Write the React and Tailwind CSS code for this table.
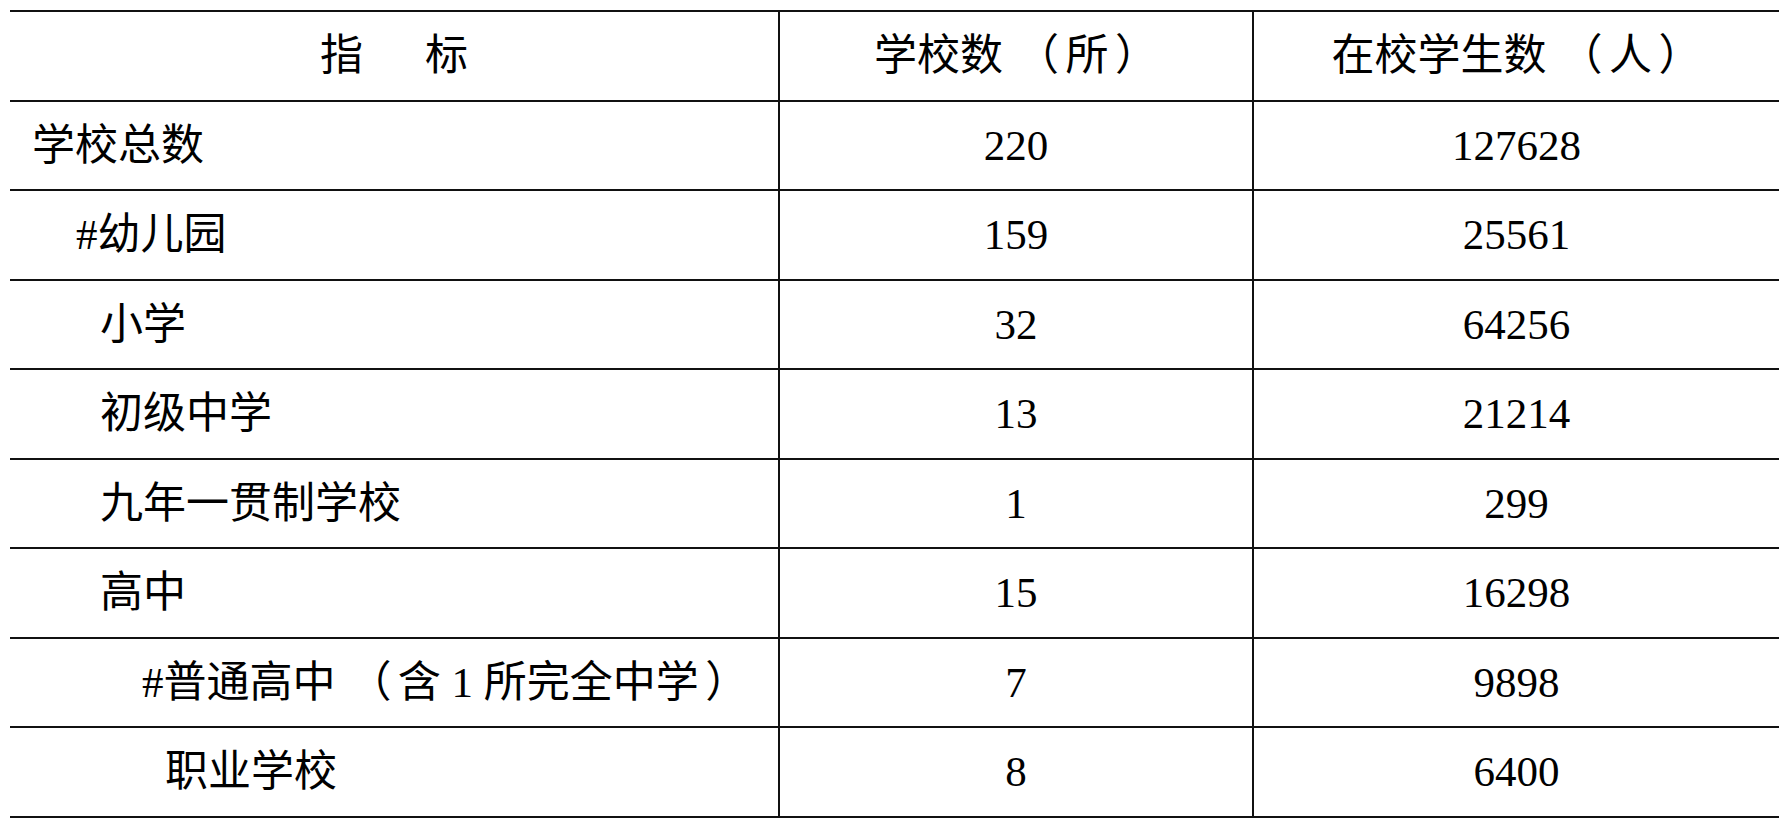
import React from 'react';

const rows = [
  { name: '学校总数', pad: 'pl-[22px]', schools: '220', students: '127628' },
  { name: '#幼儿园', pad: 'pl-[66px]', schools: '159', students: '25561' },
  { name: '小学', pad: 'pl-[90px]', schools: '32', students: '64256' },
  { name: '初级中学', pad: 'pl-[90px]', schools: '13', students: '21214' },
  { name: '九年一贯制学校', pad: 'pl-[90px]', schools: '1', students: '299' },
  { name: '高中', pad: 'pl-[90px]', schools: '15', students: '16298' },
  { name: '#普通高中（含 1 所完全中学）', pad: 'pl-[132px]', schools: '7', students: '9898' },
  { name: '职业学校', pad: 'pl-[155px]', schools: '8', students: '6400' },
];

// keep the full-width bracket spacing of the printed table
const Txt = ({ text }) =>
  text.split(/([（）])/).map((part, i) =>
    part === '（' ? (
      <span key={i} className="ml-[0.3em] mr-[0.15em]">{part}</span>
    ) : part === '）' ? (
      <span key={i} className="ml-[0.15em]">{part}</span>
    ) : (
      <React.Fragment key={i}>{part}</React.Fragment>
    )
  );

const Row = ({ children }) => (
  <div className="grid grid-cols-[770px_474px_1fr] h-[89.5px] border-b-2 border-[#111]">
    {children}
  </div>
);

const App = () => {
  return (
    <div
      lang="zh-CN"
      className="w-full h-[818px] bg-white pl-[10px] pt-[10px] overflow-hidden text-black text-[43px] leading-none"
      style={{ fontFamily: '"Liberation Serif", "Noto Sans CJK SC", serif' }}
    >
      <div className="border-t-2 border-[#111]">
        <Row>
          <div className="flex items-center justify-center gap-[62px] border-r-2 border-[#111]">
            <span>指</span>
            <span>标</span>
          </div>
          <div className="flex items-center justify-center border-r-2 border-[#111]"><span><Txt text="学校数（所）" /></span></div>
          <div className="flex items-center justify-center"><span><Txt text="在校学生数（人）" /></span></div>
        </Row>
        {rows.map(r => (
          <Row key={r.name}>
            <div className={`flex items-center border-r-2 border-[#111] ${r.pad}`}><span><Txt text={r.name} /></span></div>
            <div className="flex items-center justify-center border-r-2 border-[#111]">{r.schools}</div>
            <div className="flex items-center justify-center">{r.students}</div>
          </Row>
        ))}
      </div>
    </div>
  );
};

export default App;
